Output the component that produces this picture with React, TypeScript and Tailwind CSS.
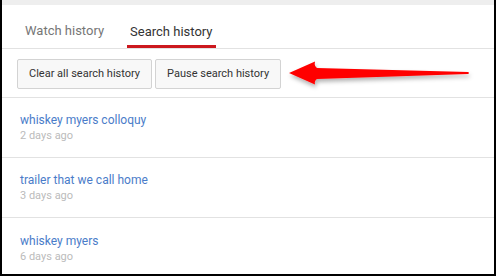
const items = [
  { query: "whiskey myers colloquy", when: "2 days ago" },
  { query: "trailer that we call home", when: "3 days ago" },
  { query: "whiskey myers", when: "6 days ago" },
];

function Arrow() {
  return (
    <svg
      className="absolute left-[283px] top-[58px]"
      width="190"
      height="34"
      viewBox="0 0 190 34"
    >
      <defs>
        <filter id="sh" x="-10%" y="-40%" width="120%" height="200%">
          <feDropShadow dx="1" dy="3" stdDeviation="2" floodColor="#000" floodOpacity="0.3" />
        </filter>
      </defs>
      <path
        d="M4 15 L30 3.5 Q29 8 32 10 L183 14 Q185 15 183 16 L32 21 Q29 23 30 26.5 Z"
        fill="#f00"
        filter="url(#sh)"
      />
    </svg>
  );
}

export default function App() {
  return (
    <div className="relative w-[496px] h-[276px] bg-white font-['Roboto',sans-serif] border-l-2 border-r-2 border-b-2 border-black overflow-hidden">
      <div className="h-[5px] bg-[#eeeeee]" />
      <div className="flex h-[44px] items-end border-b border-[#e2e2e2] pl-[21px]">
        <div className="px-[2px] pb-[8px] text-[13px] text-[#767676]">Watch history</div>
        <div className="ml-[21px] px-[3px] pb-[4px] border-b-[3px] border-[#cc181e] text-[13px] text-[#333]">
          Search history
        </div>
      </div>
      <div className="flex gap-[3px] pl-[15px] pt-[10px] pb-[8px] border-b border-[#e2e2e2]">
        <button className="h-[30px] px-[11px] rounded-[2px] border border-[#d3d3d3] bg-[#f8f8f8] text-[11px] text-[#333]">
          Clear all search history
        </button>
        <button className="h-[30px] px-[11px] rounded-[2px] border border-[#d3d3d3] bg-[#f8f8f8] text-[11px] text-[#333]">
          Pause search history
        </button>
      </div>
      {items.map((item, i) => (
        <div
          key={item.query}
          className={`h-[60px] pl-[18px] flex flex-col justify-center ${i < items.length - 1 ? "border-b border-[#e2e2e2]" : ""}`}
        >
          <div className="text-[12px] leading-[16px] text-[#4a7cc9]">{item.query}</div>
          <div className="text-[11px] leading-[15px] text-[#bbbbbb]">{item.when}</div>
        </div>
      ))}
      <Arrow />
    </div>
  );
}
